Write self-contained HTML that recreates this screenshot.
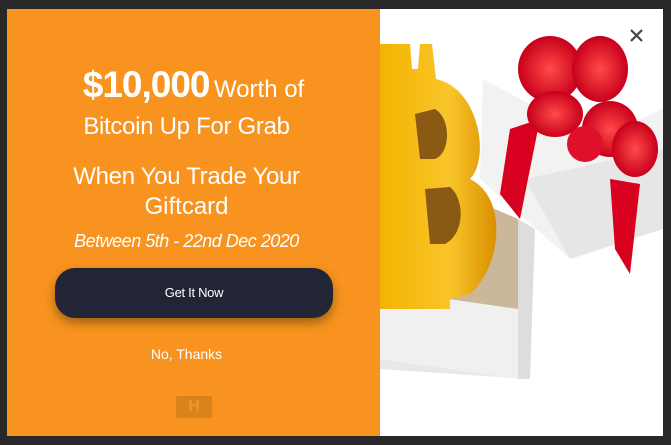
<!DOCTYPE html>
<html><head><style>
body{margin:0;width:671px;height:445px;background:#282828;overflow:hidden;font-family:"Liberation Sans",sans-serif;position:relative}
.m{position:absolute;left:7px;top:9px;width:656px;height:427px;display:flex}
.l{width:373px;height:427px;background:#f7931e;position:relative;color:#fff;text-align:center}
.r{width:283px;height:427px;background:#fff;position:relative}
.t{position:absolute;width:100%;left:0}
</style></head><body>
<div class="m">
<div class="l">
<div class="t" style="top:55px;"><span style="font-size:37px;font-weight:bold;letter-spacing:-1px">$10,000</span> <span style="font-size:24px">Worth of</span></div>
<div class="t" style="top:104px;font-size:24px;left:-7px;letter-spacing:-0.3px">Bitcoin Up For Grab</div>
<div class="t" style="top:154px;font-size:24px;left:-7px;letter-spacing:-0.3px">When You Trade Your</div>
<div class="t" style="top:184px;font-size:24px;left:-7px">Giftcard</div>
<div class="t" style="top:222px;font-size:18px;font-style:italic;left:-7px;letter-spacing:-0.5px">Between 5th - 22nd Dec 2020</div>
<div style="position:absolute;left:48px;top:259px;width:278px;height:50px;border-radius:20px;background:#222535;box-shadow:0 5px 10px rgba(0,0,0,.35);font-size:13px;line-height:50px;letter-spacing:-0.3px">Get It Now</div>
<div class="t" style="top:337px;font-size:14px;left:-7px">No, Thanks</div>
<div style="position:absolute;left:169px;top:387px;width:36px;height:22px;background:#d9831c;border-radius:2px;color:#f7931e;font-size:16px;font-weight:bold;line-height:22px">H</div>
</div>
<div class="r">
<svg width="283" height="427" viewBox="0 0 283 427">
<defs>
<linearGradient id="g" x1="0" x2="1"><stop offset="0" stop-color="#f4b400"/><stop offset=".6" stop-color="#f9c52a"/><stop offset="1" stop-color="#d98f00"/></linearGradient>
<radialGradient id="rd"><stop offset="0" stop-color="#ff4a4a"/><stop offset="1" stop-color="#c8001a"/></radialGradient>
</defs>
<polygon points="0,270 55,300 138,300 150,370 0,360" fill="#e8e8e8"/>
<polygon points="0,150 138,210 138,300 0,290" fill="#cbb89a"/>
<polygon points="138,210 155,220 150,370 138,370" fill="#ddd"/>
<polygon points="0,280 138,300 138,370 0,350" fill="#f0f0f0"/>
<polygon points="103,70 215,130 283,100 283,220 190,250 100,170" fill="#f2f2f2"/>
<polygon points="145,170 283,140 283,220 190,250" fill="#e6e6e6"/>
<path d="M0,35 L30,35 L32,60 L38,60 L40,35 L52,35 L56,70 C100,80 110,150 90,170 C130,190 120,260 90,285 L70,290 L70,300 L0,300 Z" fill="url(#g)"/>
<path d="M35,105 L55,100 C72,110 70,145 55,150 L40,150 Z M45,180 L70,178 C85,190 85,225 65,235 L50,235 Z" fill="#8a5a14"/>
<path d="M130,120 L160,110 L140,210 L120,185 Z" fill="#d8001f"/>
<path d="M230,170 L260,175 L250,265 L235,240 Z" fill="#d8001f"/>
<ellipse cx="170" cy="60" rx="32" ry="33" fill="url(#rd)"/>
<ellipse cx="220" cy="60" rx="28" ry="33" fill="url(#rd)"/>
<ellipse cx="175" cy="105" rx="28" ry="23" fill="url(#rd)"/>
<ellipse cx="230" cy="120" rx="28" ry="28" fill="url(#rd)"/>
<ellipse cx="255" cy="140" rx="23" ry="28" fill="url(#rd)"/>
<ellipse cx="205" cy="135" rx="18" ry="18" fill="#e0102a"/>
<path d="M251,21 L262,32 M262,21 L251,32" stroke="#444" stroke-width="2.2"/>
</svg>
</div>
</div>
</body></html>
